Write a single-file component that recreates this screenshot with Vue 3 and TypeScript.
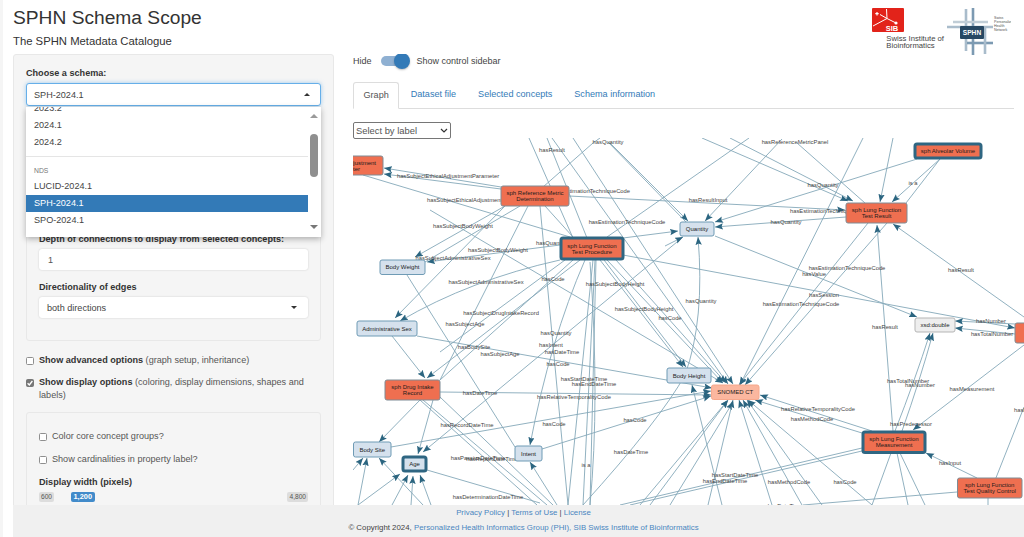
<script setup lang="ts">
type Seg = [number, number, number, number, number?];
const straight: Seg[] = [
  [501,187,384,168,1],[501,189,384,174,1],[363,175,570,237],[505,206,415,257,1],[520,206,425,262],[528,206,440,380],
  [529,138,573,238],[547,138,587,238],[552,138,728,384,1],[573,138,733,384,1],[610,143,688,221,1],[608,142,686,222],
  [593,143,543,187],[600,138,593,143],[749,138,607,237],[702,138,848,201,1],[730,138,853,201,1],[797,143,865,203],
  [782,139,705,221,1],[569,196,845,210,1],[917,159,715,222,1],[846,217,715,227,1],[623,238,678,231,1],
  [940,159,892,202,1],[940,159,906,203],[893,138,880,202,1],[863,138,740,385,1],[887,223,745,385,1],[868,223,739,385,1],
  [893,431,877,225,1],[1024,317,893,224,1],[715,236,917,317,1],[623,255,1015,328,1],[1015,324,955,321,1],[1015,334,955,328,1],
  [600,260,683,367,1],[604,260,686,367,1],[607,260,723,383,1],[616,260,726,383,1],[430,210,723,383,1],
  [593,260,568,505],[595,260,583,505],[596,260,590,505],[540,206,568,505],[580,260,427,378,1],[505,206,395,318,1],
  [560,245,427,262,1],[407,275,515,447],[392,336,425,378,1],[417,336,712,388,1],[420,400,379,442,1],[433,400,418,454,1],
  [440,392,711,395,1],[420,400,537,505],[423,400,547,505],[440,397,553,505],[391,447,711,391,1],[542,449,711,396,1],
  [427,470,540,503],[353,470,363,458,1],[358,505,367,458,1],[423,505,379,458,1],[358,505,400,474,1],[392,505,408,475,1],
  [411,505,413,476,1],[431,505,420,475,1],[557,505,530,462,1],[722,505,692,385,1],[640,505,728,400,1],[650,505,728,400,1],
  [670,505,733,402,1],[708,505,733,400,1],[772,505,739,400,1],[802,505,743,400,1],[822,505,747,400,1],[872,505,748,400,1],
  [872,431,760,395,1],[862,433,755,400,1],[862,448,620,505],[862,451,630,505],[891,453,872,505],[897,453,908,505],
  [900,453,925,505],[1024,345,913,430,1],[977,478,926,453,1],[957,492,803,505],[988,498,1024,407],[988,498,988,505],
  [545,206,573,237],[683,237,423,452,1],[665,246,683,237,1],[565,260,440,352],[573,260,440,380],
];
const curves: [string, number][] = [
  ["M583 505Q660 420 685 375Q705 320 698 237", 1],
  ["M585 260Q550 340 530 445", 1],
  ["M560 260Q470 280 400 321", 1],
  ["M895 431Q915 380 930 333", 1],
  ["M902 431Q920 380 933 333", 1],
  ["M590 262Q600 400 590 505", 0],
];
const edges = [
  ...straight.map((s) => ({ d: `M${s[0]} ${s[1]}L${s[2]} ${s[3]}`, arrow: !!s[4] })),
  ...curves.map((c) => ({ d: c[0], arrow: !!c[1] })),
];

type Lab = [string, number, number, string?];
const labels: Lab[] = [
  ["hasQuantity",608,142],["hasResult",552,150],["hasSubjectEthicalAdjustmentParameter",448,176],
  ["hasSubjectEthicalAdjustmentParameter",427,200,"start"],["hasEstimationTechniqueCode",630,191,"end"],
  ["hasEstimationTechniqueCode",627,222],["hasSubjectBodyWeight",463,226],["hasSubjectBodyWeight",498,250],
  ["hasQuantity",536,243,"start"],["hasSubjectAdministrativeSex",453,258],["hasSubjectAdministrativeSex",486,282],
  ["hasCode",553,279],["hasSubjectBodyHeight",615,284],["hasSubjectBodyHeight",644,309],["hasCode",670,318],
  ["hasQuantity",701,301],["hasSubjectDrugIntakeRecord",501,313],["hasSubjectAge",465,324],["hasQuantity",556,333],
  ["hasBodySite",474,347],["hasIntent",551,345],["hasSubjectAge",500,354],["hasDateTime",562,352],["hasCode",558,364],
  ["hasStartDateTime",584,379],["hasEndDateTime",594,384],["hasDateTime",480,393],["hasRelativeTemporalityCode",574,397],
  ["hasRecordDateTime",467,425],["hasCode",554,424],["hasCode",635,420],["hasDateTime",631,452],
  ["hasPassiveDateTime",478,458],["hasReportDateTime",492,459],["is a",586,465],["hasDeterminationDateTime",488,497],
  ["hasReferenceMetricPanel",795,142],["hasQuantity",823,185],["is a",913,183],["hasResultInput",708,200],
  ["hasEstimationTechniqueCode",790,211,"start"],["hasQuantity",786,222],["hasEstimationTechniqueCode",847,268],
  ["hasValue",814,274],["hasResult",961,270],["hasSession",824,295],["hasEstimationTechniqueCode",801,304],
  ["hasResult",885,327],["hasNumber",991,321],["hasTotalNumber",992,334],["hasTotalNumber",908,381],["hasNumber",920,385],
  ["hasMeasurement",972,389],["hasResult",1014,410,"start"],["hasRelativeTemporalityCode",818,409],["hasMethodCode",812,419],
  ["hasPredecessor",911,424],["hasInput",950,463],["hasStartDateTime",735,475],["hasEndDateTime",725,481],
  ["hasMethodCode",789,482],["hasCode",845,482],["hasDateTime",785,506],
];

type GNode = { x: number; y: number; w: number; h: number; kind: string; lines: string[]; tx?: number[] };
const nodes: GNode[] = [
  { x: 340, y: 156, w: 43, h: 19, kind: "concept", lines: ["Adjustment", "Parameter"], tx: [361, 346] },
  { x: 501, y: 186, w: 68, h: 20, kind: "concept", lines: ["sph Reference Metric", "Determination"] },
  { x: 561, y: 238, w: 62, h: 21, kind: "focus", lines: ["sph Lung Function", "Test Procedure"] },
  { x: 680, y: 222, w: 34, h: 14, kind: "ext", lines: ["Quantity"] },
  { x: 846, y: 203, w: 61, h: 20, kind: "concept", lines: ["sph Lung Function", "Test Result"] },
  { x: 915, y: 144, w: 66, h: 14, kind: "focus", lines: ["sph Alveolar Volume"] },
  { x: 915, y: 318, w: 40, h: 14, kind: "datatype", lines: ["xsd:double"] },
  { x: 1015, y: 323, w: 30, h: 20, kind: "concept", lines: ["sph", ""], tx: [1030, 1030] },
  { x: 380, y: 260, w: 45, h: 14.5, kind: "ext", lines: ["Body Weight"] },
  { x: 357, y: 321, w: 60, h: 15, kind: "ext", lines: ["Administrative Sex"] },
  { x: 385, y: 380, w: 55, h: 20, kind: "concept", lines: ["sph Drug Intake", "Record"] },
  { x: 353.5, y: 442, w: 37.5, h: 15, kind: "ext", lines: ["Body Site"] },
  { x: 403, y: 457, w: 23, h: 14, kind: "focus-ext", lines: ["Age"] },
  { x: 515, y: 446, w: 27, h: 15, kind: "ext", lines: ["Intent"] },
  { x: 667, y: 368, w: 44, h: 15, kind: "ext", lines: ["Body Height"] },
  { x: 711.5, y: 385, w: 47.5, h: 14.5, kind: "term", lines: ["SNOMED CT"] },
  { x: 863, y: 432, w: 62, h: 20.5, kind: "focus", lines: ["sph Lung Function", "Measurement"] },
  { x: 957.5, y: 478, w: 64.5, h: 20, kind: "concept", lines: ["sph Lung Function", "Test Quality Control"] },
];
const tabs = ["Dataset file", "Selected concepts", "Schema information"];
</script>

<template>
  <div class="page">
    <div class="strip"></div>
    <div class="shell">
      <header class="head">
        <div>
          <h2 class="title">SPHN Schema Scope</h2>
          <p class="subtitle">The SPHN Metadata Catalogue</p>
        </div>
        <div class="logos">
          <div class="sib">
            <svg class="sib-mark" viewBox="0 0 32 24" width="32" height="24">
              <rect width="32" height="24" rx="1" fill="#e2231a" />
              <path d="M8 6.5L15 10.5L24 15M15 10.5L14.5 1M15 10.5L1 18" stroke="#fff" stroke-width="1" fill="none" />
              <circle cx="24" cy="15" r="1.6" fill="#fff" />
              <path d="M5 4v3.4M3.3 5.7h3.4" stroke="#fff" stroke-width="1.2" />
              <text x="20" y="22.5" text-anchor="middle" class="sib-text">SIB</text>
            </svg>
            <div class="sib-name">Swiss Institute of<br />Bioinformatics</div>
          </div>
          <svg class="sphn" viewBox="0 0 64 48" width="64" height="48">
            <g fill="none" stroke-width="2.6">
              <path d="M19 1V43" stroke="#a9bccb" />
              <path d="M26 0V47" stroke="#7c9ab2" />
              <path d="M6 14H41" stroke="#c0cdd6" />
              <path d="M0 19H46" stroke="#a9bccb" />
              <path d="M20 35H46" stroke="#7c9ab2" />
              <path d="M38 20V46" stroke="#a9bccb" />
            </g>
            <rect x="13" y="18" width="24" height="13" rx="1" fill="#274863" />
            <text x="25" y="27" text-anchor="middle" class="sphn-text">SPHN</text>
            <text x="47" y="11" class="sphn-mini">Swiss</text>
            <text x="47" y="15" class="sphn-mini">Personalized</text>
            <text x="47" y="19" class="sphn-mini">Health</text>
            <text x="47" y="23" class="sphn-mini">Network</text>
          </svg>
        </div>
      </header>

      <div class="body">
        <aside class="well">
          <label class="lbl">Choose a schema:</label>
          <div class="picker">
            <div class="control open">
              <span>SPH-2024.1</span><i class="caret up"></i>
            </div>
            <div class="menu">
              <div class="menu-list">
                <div class="opt">2023.2</div>
                <div class="opt">2024.1</div>
                <div class="opt">2024.2</div>
                <div class="divider"></div>
                <div class="group">NDS</div>
                <div class="opt">LUCID-2024.1</div>
                <div class="opt sel">SPH-2024.1</div>
                <div class="opt">SPO-2024.1</div>
              </div>
              <div class="scrollbar">
                <i class="sb-up"></i>
                <span class="thumb"></span>
                <i class="sb-down"></i>
              </div>
            </div>
          </div>

          <section class="inner first">
            <label class="lbl">Depth of connections to display from selected concepts:</label>
            <div class="control"><span class="num">1</span></div>
            <label class="lbl second">Directionality of edges</label>
            <div class="control"><span>both directions</span><i class="caret"></i></div>
          </section>

          <div class="check"><span class="box"></span><p><b>Show advanced options</b> (graph setup, inheritance)</p></div>
          <div class="check two">
            <span class="box on"><svg viewBox="0 0 8 8" width="8" height="8"><path d="M1.6 4.2L3.3 6L6.4 2" fill="none" stroke="#fff" stroke-width="1.3" /></svg></span>
            <p><b>Show display options</b> (coloring, display dimensions, shapes and labels)</p>
          </div>

          <section class="inner last">
            <div class="check tight"><span class="box"></span><p>Color core concept groups?</p></div>
            <div class="check tight"><span class="box"></span><p>Show cardinalities in property label?</p></div>
            <label class="lbl">Display width (pixels)</label>
            <div class="slider">
              <span class="tag">600</span>
              <span class="tag cur">1,200</span>
              <span class="tag end">4,800</span>
            </div>
          </section>
        </aside>

        <main class="content">
          <div class="toggle">
            <span>Hide</span>
            <span class="switch"><i></i></span>
            <span>Show control sidebar</span>
          </div>
          <nav class="tabs">
            <span class="tab active">Graph</span>
            <a v-for="t in tabs" :key="t" class="tab">{{ t }}</a>
          </nav>
          <div class="by-label-wrap">
            <select class="by-label"><option>Select by label</option></select>
            <svg class="chev" viewBox="0 0 8 5" width="8" height="5"><path d="M1 1L4 4L7 1" fill="none" stroke="#333" stroke-width="1.2" /></svg>
          </div>
          <svg class="graph" viewBox="353 138 671 367" width="671" height="367">
            <defs>
              <marker id="arr" markerUnits="userSpaceOnUse" markerWidth="9" markerHeight="7" refX="8" refY="3.2" orient="auto">
                <path d="M0 0L8 3.2L0 6.4L1.4 3.2Z" fill="#2b6580" />
              </marker>
            </defs>
            <path v-for="(e, i) in edges" :key="'e' + i" :d="e.d" class="edge" :marker-end="e.arrow ? 'url(#arr)' : undefined" />
            <text v-for="(l, i) in labels" :key="'l' + i" :x="l[1]" :y="l[2] + 2" class="elabel" :text-anchor="l[3] || 'middle'">{{ l[0] }}</text>
            <g v-for="(n, i) in nodes" :key="'n' + i" :class="['node', n.kind]">
              <rect :x="n.x" :y="n.y" :width="n.w" :height="n.h" rx="2" />
              <text v-for="(t, j) in n.lines" :key="j" :x="n.tx ? n.tx[j] : n.x + n.w / 2" :y="n.y + n.h / 2 + 2 + (j - (n.lines.length - 1) / 2) * 6" text-anchor="middle">{{ t }}</text>
            </g>
          </svg>
        </main>
      </div>

      <footer class="foot">
        <div><a>Privacy Policy</a> | <a>Terms of Use</a> | <a>License</a></div>
        <div>© Copyright 2024, <a>Personalized Health Informatics Group (PHI), SIB Swiss Institute of Bioinformatics</a></div>
      </footer>
    </div>
  </div>
</template>

<style>
html, body { margin: 0; background: #fff; }
</style>

<style scoped>
* { box-sizing: border-box; }
.page { display: flex; width: 1024px; height: 537px; overflow: hidden; font-family: "Liberation Sans", Arial, sans-serif; font-size: 9.1px; color: #333; }
.strip { width: 3px; background: #f5f5f5; flex: none; }
.shell { flex: 1; min-width: 0; padding-left: 10px; display: flex; flex-direction: column; }
.head { height: 54px; flex: none; display: flex; justify-content: space-between; }
.title { margin: 7px 0 0; font-size: 19.2px; font-weight: 400; line-height: 22px; }
.subtitle { margin: 6px 0 0; font-size: 11.3px; line-height: 13px; }
.logos { display: flex; gap: 3px; padding: 8px 13px 0 0; align-items: flex-start; }
.sib-mark { display: block; }
.sib-text { font: 700 7.5px "Liberation Sans", sans-serif; fill: #fff; }
.sib-name { margin: 3px 0 0 14px; font-size: 7.7px; line-height: 7px; color: #444; }
.sphn-text { font: 700 6.6px "Liberation Sans", sans-serif; fill: #fff; }
.sphn-mini { font: 3.6px "Liberation Sans", sans-serif; fill: #555; }
.body { flex: 1; min-height: 0; display: flex; gap: 19px; overflow: hidden; }
.well { width: 321px; flex: none; background: #f5f5f5; border: 1px solid #e8e8e8; border-radius: 3px; padding: 12px; height: 600px; }
.lbl { display: block; font-weight: 700; line-height: 12px; margin-bottom: 4px; }
.lbl.second { margin-top: 11px; }
.picker { position: relative; }
.control { height: 21px; background: #fff; border-radius: 3px; box-shadow: 0 0 2px rgba(0, 0, 0, .18); padding: 0 8px; display: flex; align-items: center; justify-content: space-between; color: #444; }
.control.open { border: 1px solid #66afe9; box-shadow: 0 0 4px rgba(102, 175, 233, .6); height: 23px; padding: 0 7px; }
.num { color: #555; margin-left: 1px; }
.caret { width: 0; height: 0; border-left: 3.5px solid transparent; border-right: 3.5px solid transparent; border-top: 3.5px solid #333; margin-right: 3px; }
.caret.up { border-top: 0; border-bottom: 3.5px solid #333; }
.menu { position: absolute; z-index: 3; left: 0; right: 0; top: 24px; height: 130px; background: #fff; box-shadow: 0 2px 6px rgba(0, 0, 0, .3); overflow: hidden; display: flex; }
.menu-list { flex: 1; margin-top: -7px; }
.opt { height: 17px; line-height: 17px; padding-left: 8px; color: #444; }
.opt.sel { background: #337ab7; color: #fff; }
.divider { height: 1px; background: #e5e5e5; margin: 5px 0 7px; }
.group { height: 13px; padding-left: 8px; font-size: 6.8px; line-height: 13px; color: #777; margin-bottom: 1px; }
.scrollbar { width: 13px; flex: none; position: relative; background: #fff; }
.thumb { position: absolute; left: 2px; width: 7.5px; top: 27px; height: 43px; border-radius: 4px; background: #8f8f8f; }
.sb-up, .sb-down { position: absolute; left: 2px; width: 0; height: 0; border-left: 4px solid transparent; border-right: 4px solid transparent; }
.sb-up { top: 7px; border-bottom: 4px solid #9a9a9a; }
.sb-down { bottom: 8px; border-top: 4px solid #777; }
.inner { border: 1px solid #e8e8e8; border-radius: 3px; padding: 12px; }
.inner.first { margin-top: 2px; padding-top: 124px; padding-bottom: 22px; }
.inner.last { margin-top: 10px; padding-top: 17px; }
.check { display: flex; gap: 5px; margin-top: 13px; line-height: 13px; color: #555; align-items: flex-start; }
.check p { margin: 0; }
.check b { color: #333; }
.check.two { margin-top: 9px; }
.check.two p { padding-right: 12px; }
.check.tight { margin: 0 0 10px; }
.box { width: 8px; height: 8px; flex: none; margin-top: 3px; background: #fff; border: 1px solid #8f8f8f; border-radius: 1.5px; }
.box.on { background: #777; border-color: #777; display: flex; align-items: center; justify-content: center; }
.box.on svg { margin: -1px; }
.slider { display: flex; justify-content: space-between; position: relative; margin-top: 1px; }
.tag { background: #ddd; color: #555; font-size: 6.6px; line-height: 10px; padding: 0 2px; border-radius: 2px; }
.tag.cur { background: #428bca; color: #fff; font-weight: 700; font-size: 7.4px; position: absolute; left: 32px; padding: 0 2.5px; }
.content { flex: 1; min-width: 0; }
.toggle { height: 14px; margin-bottom: 14px; display: flex; align-items: center; gap: 9px; font-size: 9px; color: #444; }
.switch { position: relative; width: 24px; height: 10px; border-radius: 5px; background: #8fb0d2; margin-right: 3px; }
.switch i { position: absolute; right: -5px; top: -3px; width: 16px; height: 16px; border-radius: 50%; background: #337ab7; box-shadow: 0 1px 2px rgba(0, 0, 0, .25); }
.tabs { margin: 0 10px 0 0; height: 27px; border-bottom: 1px solid #ddd; display: flex; }
.tab { height: 27px; line-height: 25px; padding: 0 10.5px; color: #337ab7; font-size: 9.1px; margin-right: .9px; }
.tab.active { color: #555; background: #fff; border: 1px solid #ddd; border-bottom-color: #fff; border-radius: 3px 3px 0 0; padding: 0 9.5px; }
.by-label-wrap { position: relative; margin-top: 13px; width: 98px; height: 17px; }
.by-label { display: block; width: 100%; height: 100%; font: 9.4px "Liberation Sans", sans-serif; color: #555; background: #fff; border: 1px solid #767676; border-radius: 2px; padding: 0 0 0 2px; appearance: none; }
.chev { position: absolute; right: 3px; top: 6px; pointer-events: none; }
.graph { display: block; margin-top: -1px; }
.edge { fill: none; stroke: #84a8b9; stroke-width: .9; }
.elabel { font-size: 5.8px; fill: #444; }
.node rect { stroke-width: 1; }
.node text { font-size: 6px; fill: #1c1c1c; }
.concept rect { fill: #ef6f50; stroke: #7f8c95; }
.focus rect { fill: #ef6f50; stroke: #2f6682; stroke-width: 3; }
.ext rect { fill: #d5e1ed; stroke: #6f9bb5; }
.focus-ext rect { fill: #d5e1ed; stroke: #2f6682; stroke-width: 3; }
.datatype rect { fill: #eeeeee; stroke: #b5b5b5; }
.term rect { fill: #fbb79f; stroke: #f6a88c; }
.foot { height: 32px; flex: none; background: #f0f0f0; text-align: center; padding: 0 0 0 10px; font-size: 7.85px; line-height: 15px; color: #444; position: relative; }
.foot a { color: #4a86c0; }
</style>
